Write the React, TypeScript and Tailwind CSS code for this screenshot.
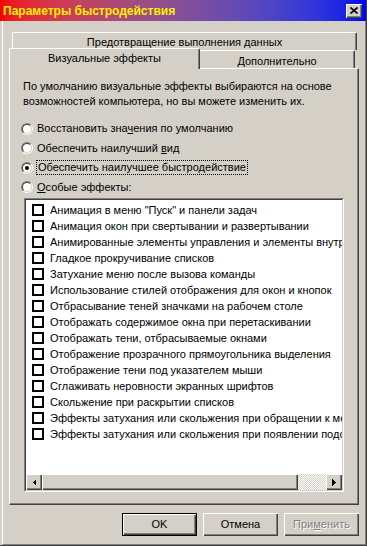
import React from 'react';

const effects = [
  'Анимация в меню "Пуск" и панели задач',
  'Анимация окон при свертывании и развертывании',
  'Анимированные элементы управления и элементы внутри окна',
  'Гладкое прокручивание списков',
  'Затухание меню после вызова команды',
  'Использование стилей отображения для окон и кнопок',
  'Отбрасывание теней значками на рабочем столе',
  'Отображать содержимое окна при перетаскивании',
  'Отображать тени, отбрасываемые окнами',
  'Отображение прозрачного прямоугольника выделения',
  'Отображение тени под указателем мыши',
  'Сглаживать неровности экранных шрифтов',
  'Скольжение при раскрытии списков',
  'Эффекты затухания или скольжения при обращении к меню',
  'Эффекты затухания или скольжения при появлении подсказок',
];

const raised = 'bg-[#d4d0c8] shadow-[inset_1px_1px_#ffffff,inset_-1px_-1px_#404040,inset_-2px_-2px_#808080]';

const Radio = ({ checked }: { checked?: boolean }) => (
  <span className="w-[12px] h-[12px] rounded-full border border-t-[#808080] border-l-[#808080] border-r-white border-b-white flex-none flex">
    <span className="flex-1 rounded-full border border-t-[#404040] border-l-[#404040] border-r-[#d4d0c8] border-b-[#d4d0c8] bg-white flex items-center justify-center">
      {checked && <span className="w-[4px] h-[4px] rounded-full bg-black" />}
    </span>
  </span>
);

const Arrow = ({ dir }: { dir: 'left' | 'right' }) => (
  <div className={`w-[16px] h-[16px] flex-none flex items-center justify-center ${raised}`}>
    <svg width="4" height="7" viewBox="0 0 4 7" shapeRendering="crispEdges">
      {dir === 'left' ? <polygon points="4,0 4,7 0.5,3.5" fill="#000" /> : <polygon points="0,0 0,7 3.5,3.5" fill="#000" />}
    </svg>
  </div>
);

export default function App() {
  return (
    <div className="w-[367px] h-[546px] bg-[#d4d0c8] flex flex-col overflow-hidden border-r border-b border-[#404040] font-['Liberation_Sans',sans-serif] text-[11px] text-black select-none">
      {/* title bar */}
      <div className="h-[21px] flex-none flex items-center pl-[3px] pr-[4px] bg-linear-to-r from-[#f20000] to-[#0000f0]">
        <span className="flex-1 font-bold text-[12px] text-[#fff000] leading-none pt-[1px]">Параметры быстродействия</span>
        <div className={`w-[16px] h-[14px] flex items-center justify-center ${raised}`}>
          <svg width="8" height="7" viewBox="0 0 8 7">
            <path d="M0.5 0.5 L7.5 6.5 M7.5 0.5 L0.5 6.5" stroke="#000" strokeWidth="1.7" />
          </svg>
        </div>
      </div>

      <div className="flex-1 flex flex-col ml-[2px] border-l border-white border-r border-b border-r-[#808080] border-b-[#808080] px-[6px] pt-[11px]">
        {/* tabs */}
        <div className="ml-[3px] mr-[2px] h-[18px] rounded-t-[2px] border-t border-l border-white border-r border-r-[#404040] shadow-[inset_-1px_0_#808080] flex justify-center pt-[3px] leading-[13px]">
          Предотвращение выполнения данных
        </div>
        <div className="h-[18px] flex">
          <div className="relative z-10 -mt-[2px] h-[21px] w-[191px] bg-[#d4d0c8] rounded-t-[2px] border-t border-l border-white border-r border-r-[#404040] shadow-[inset_-1px_0_#808080] flex justify-center pt-[3px] leading-[13px]">
            Визуальные эффекты
          </div>
          <div className="h-[18px] w-[155px] rounded-t-[2px] border-t border-white border-r border-r-[#404040] shadow-[inset_-1px_0_#808080] flex justify-center pt-[4px] leading-[13px]">
            Дополнительно
          </div>
        </div>

        {/* panel */}
        <div className="h-[437px] flex flex-col border-t border-l border-white border-r border-b border-r-[#404040] border-b-[#404040] shadow-[inset_-1px_-1px_#808080] pl-[13px] pt-[10px]">
          <p className="leading-[15px]">
            По умолчанию визуальные эффекты выбираются на основе
            <br />
            возможностей компьютера, но вы можете изменить их.
          </p>

          <div className="mt-[10px] flex flex-col">
            <div className="h-[19px] flex items-center gap-[4px] -ml-[2px]">
              <Radio />
              <span>Восстановить зна<u>ч</u>ения по умолчанию</span>
            </div>
            <div className="h-[20px] flex items-center gap-[4px] -ml-[2px]">
              <Radio />
              <span>Обеспечить наилучший <u>в</u>ид</span>
            </div>
            <div className="h-[19px] flex items-center gap-[3px] -ml-[2px]">
              <Radio checked />
              <span className="border border-dotted border-black px-[1px] leading-[13px]">Обеспечить наилучшее быстродействие</span>
            </div>
            <div className="h-[20px] flex items-center gap-[4px] -ml-[2px]">
              <Radio />
              <span><u>О</u>собые эффекты:</span>
            </div>
          </div>

          {/* list */}
          <div className="mt-[1px] ml-[1px] w-[320px] h-[294px] flex flex-col border border-t-[#808080] border-l-[#808080] border-r-white border-b-white">
            <div className="flex-1 flex flex-col border border-t-[#404040] border-l-[#404040] border-r-[#d4d0c8] border-b-[#d4d0c8] bg-white overflow-hidden">
              <div className="flex-1 flex flex-col pt-[2px] overflow-hidden">
                {effects.map((e) => (
                  <div key={e} className="h-[16px] flex-none flex items-center pl-[6px] gap-[6px] whitespace-nowrap">
                    <span className="w-[12px] h-[12px] flex-none border-2 border-black bg-white" />
                    <span>{e}</span>
                  </div>
                ))}
              </div>
              <div className="h-[16px] flex-none flex">
                <Arrow dir="left" />
                <div className={`w-[256px] flex-none ${raised}`} />
                <div className="flex-1 bg-[repeating-conic-gradient(#d4d0c8_0%_25%,#ffffff_0%_50%)] bg-[length:2px_2px]" />
                <Arrow dir="right" />
              </div>
            </div>
          </div>
        </div>

        {/* buttons */}
        <div className="mt-[8px] flex justify-end gap-[6px]">
          <button className="w-[75px] h-[23px] border border-black bg-[#d4d0c8] shadow-[inset_1px_1px_#ffffff,inset_-1px_-1px_#404040,inset_-2px_-2px_#808080]">
            OK
          </button>
          <button className={`w-[75px] h-[23px] ${raised}`}>Отмена</button>
          <button className={`w-[75px] h-[23px] ${raised} text-[#808080] [text-shadow:1px_1px_#ffffff]`}>
            При<u>м</u>енить
          </button>
        </div>
      </div>
    </div>
  );
}
